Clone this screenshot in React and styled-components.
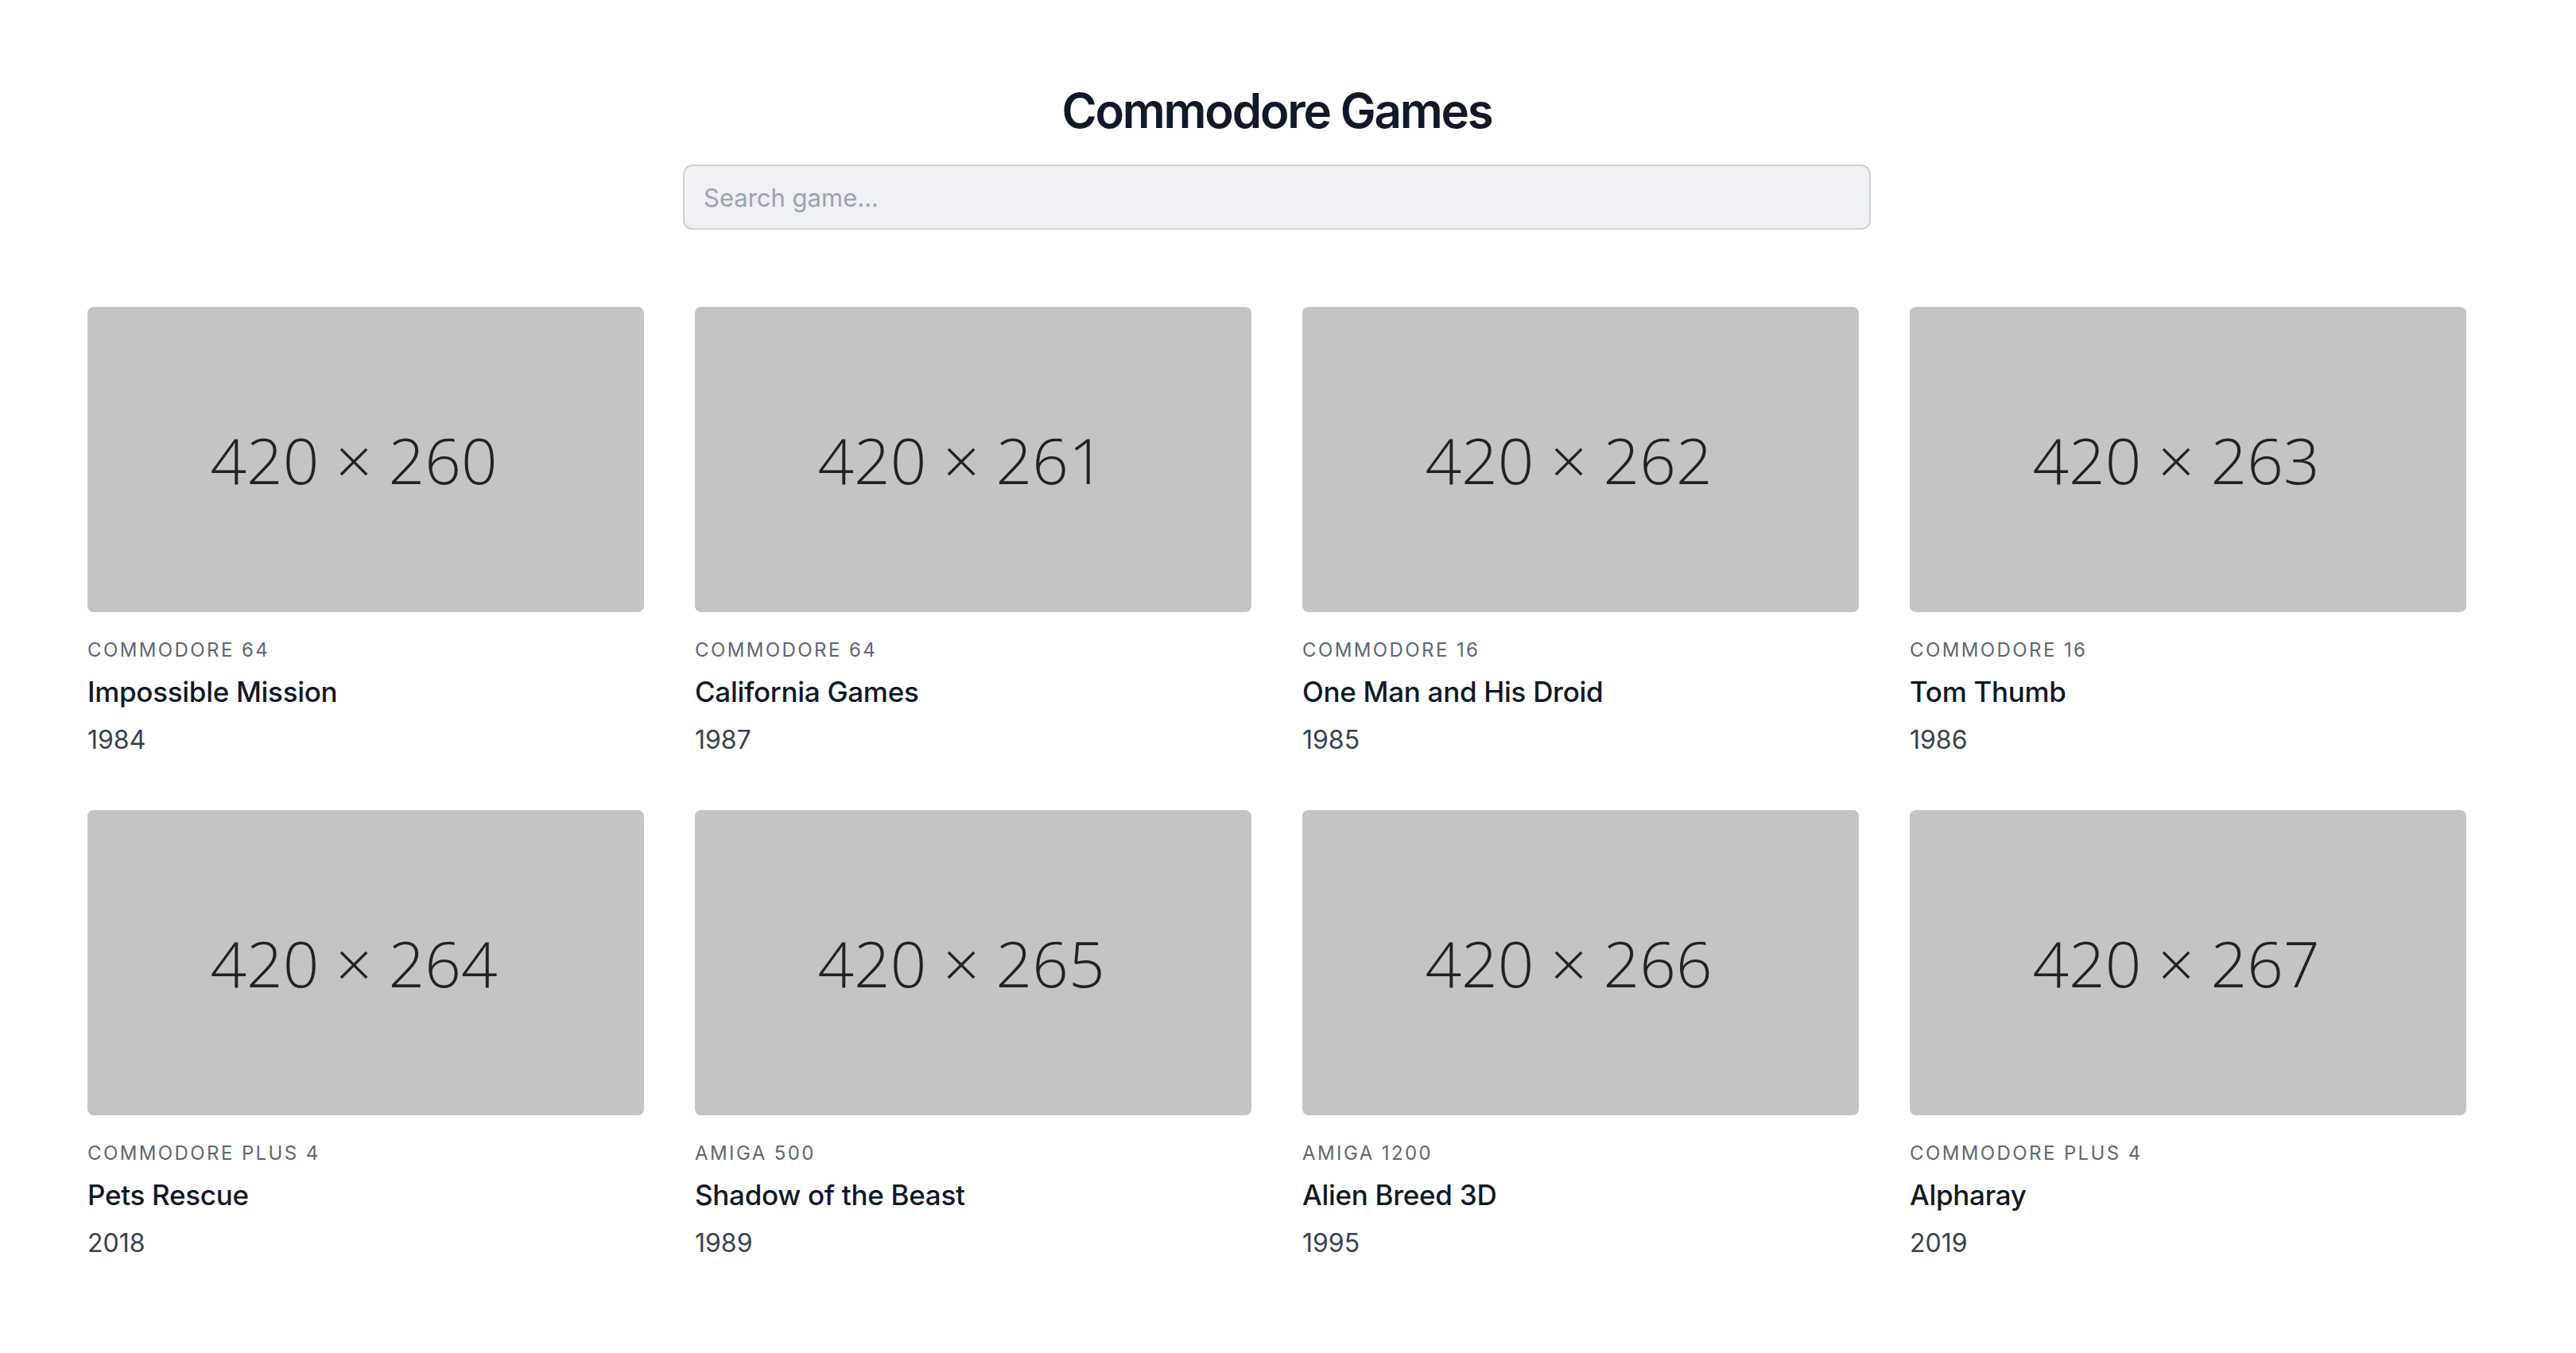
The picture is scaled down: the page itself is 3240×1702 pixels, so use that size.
import React from "react";
import styled, { createGlobalStyle } from "styled-components";

const GlobalStyle = createGlobalStyle`
  * { box-sizing: border-box; }
  html, body { margin: 0; padding: 0; background: #ffffff; }
  body {
    font-family: Inter, "Noto Sans", "Liberation Sans", sans-serif;
    color: #111827;
  }
`;

const Page = styled.main`
  width: 2992px;
  margin-left: 110px;
  padding: 99px 0 120px;
  display: flex;
  flex-direction: column;
  align-items: center;
`;

const Heading = styled.h1`
  margin: 0;
  font-size: 60px;
  line-height: 80px;
  font-weight: 600;
  color: #111827;
  letter-spacing: -2.2px;
`;

const SearchInput = styled.input`
  margin-top: 28px;
  width: 1494px;
  height: 82px;
  padding: 0 24px;
  border: 2px solid #cdd0d5;
  border-radius: 12px;
  background: #eff0f3;
  font-family: inherit;
  font-size: 31px;
  color: #111827;
  outline: none;
  &::placeholder {
    color: #9ca3af;
  }
`;

const Grid = styled.section`
  margin-top: 97px;
  width: 100%;
  display: grid;
  grid-template-columns: repeat(4, 1fr);
  column-gap: 64px;
  row-gap: 64px;
`;

const Card = styled.article`
  display: flex;
  flex-direction: column;
`;

const Thumb = styled.div`
  height: 384px;
  border-radius: 8px;
  background: #c4c4c4;
  display: flex;
  align-items: center;
  justify-content: center;
  padding-right: 30px;
  padding-bottom: 2px;
  font-family: "Open Sans", "Noto Sans", sans-serif;
  font-weight: 300;
  font-size: 80px;
  color: #222222;
`;

const Platform = styled.div`
  margin-top: 32px;
  font-size: 24px;
  line-height: 32px;
  letter-spacing: 2.4px;
  text-transform: uppercase;
  color: #5f6673;
`;

const Title = styled.h2`
  margin: 8px 0 0;
  font-size: 35px;
  line-height: 56px;
  font-weight: 500;
  letter-spacing: -0.3px;
  color: #111827;
`;

const Year = styled.div`
  margin-top: 9px;
  font-size: 32px;
  line-height: 48px;
  color: #374151;
`;

const games = [
  { platform: "Commodore 64", title: "Impossible Mission", year: 1984, h: 260 },
  { platform: "Commodore 64", title: "California Games", year: 1987, h: 261 },
  { platform: "Commodore 16", title: "One Man and His Droid", year: 1985, h: 262 },
  { platform: "Commodore 16", title: "Tom Thumb", year: 1986, h: 263 },
  { platform: "Commodore Plus 4", title: "Pets Rescue", year: 2018, h: 264 },
  { platform: "Amiga 500", title: "Shadow of the Beast", year: 1989, h: 265 },
  { platform: "Amiga 1200", title: "Alien Breed 3D", year: 1995, h: 266 },
  { platform: "Commodore Plus 4", title: "Alpharay", year: 2019, h: 267 },
];

export default function App() {
  return (
    <>
      <GlobalStyle />
      <Page>
        <Heading>Commodore Games</Heading>
        <SearchInput type="text" placeholder="Search game..." />
        <Grid>
          {games.map((g) => (
            <Card key={g.title}>
              <Thumb>{`420 × ${g.h}`}</Thumb>
              <Platform>{g.platform}</Platform>
              <Title>{g.title}</Title>
              <Year>{g.year}</Year>
            </Card>
          ))}
        </Grid>
      </Page>
    </>
  );
}
